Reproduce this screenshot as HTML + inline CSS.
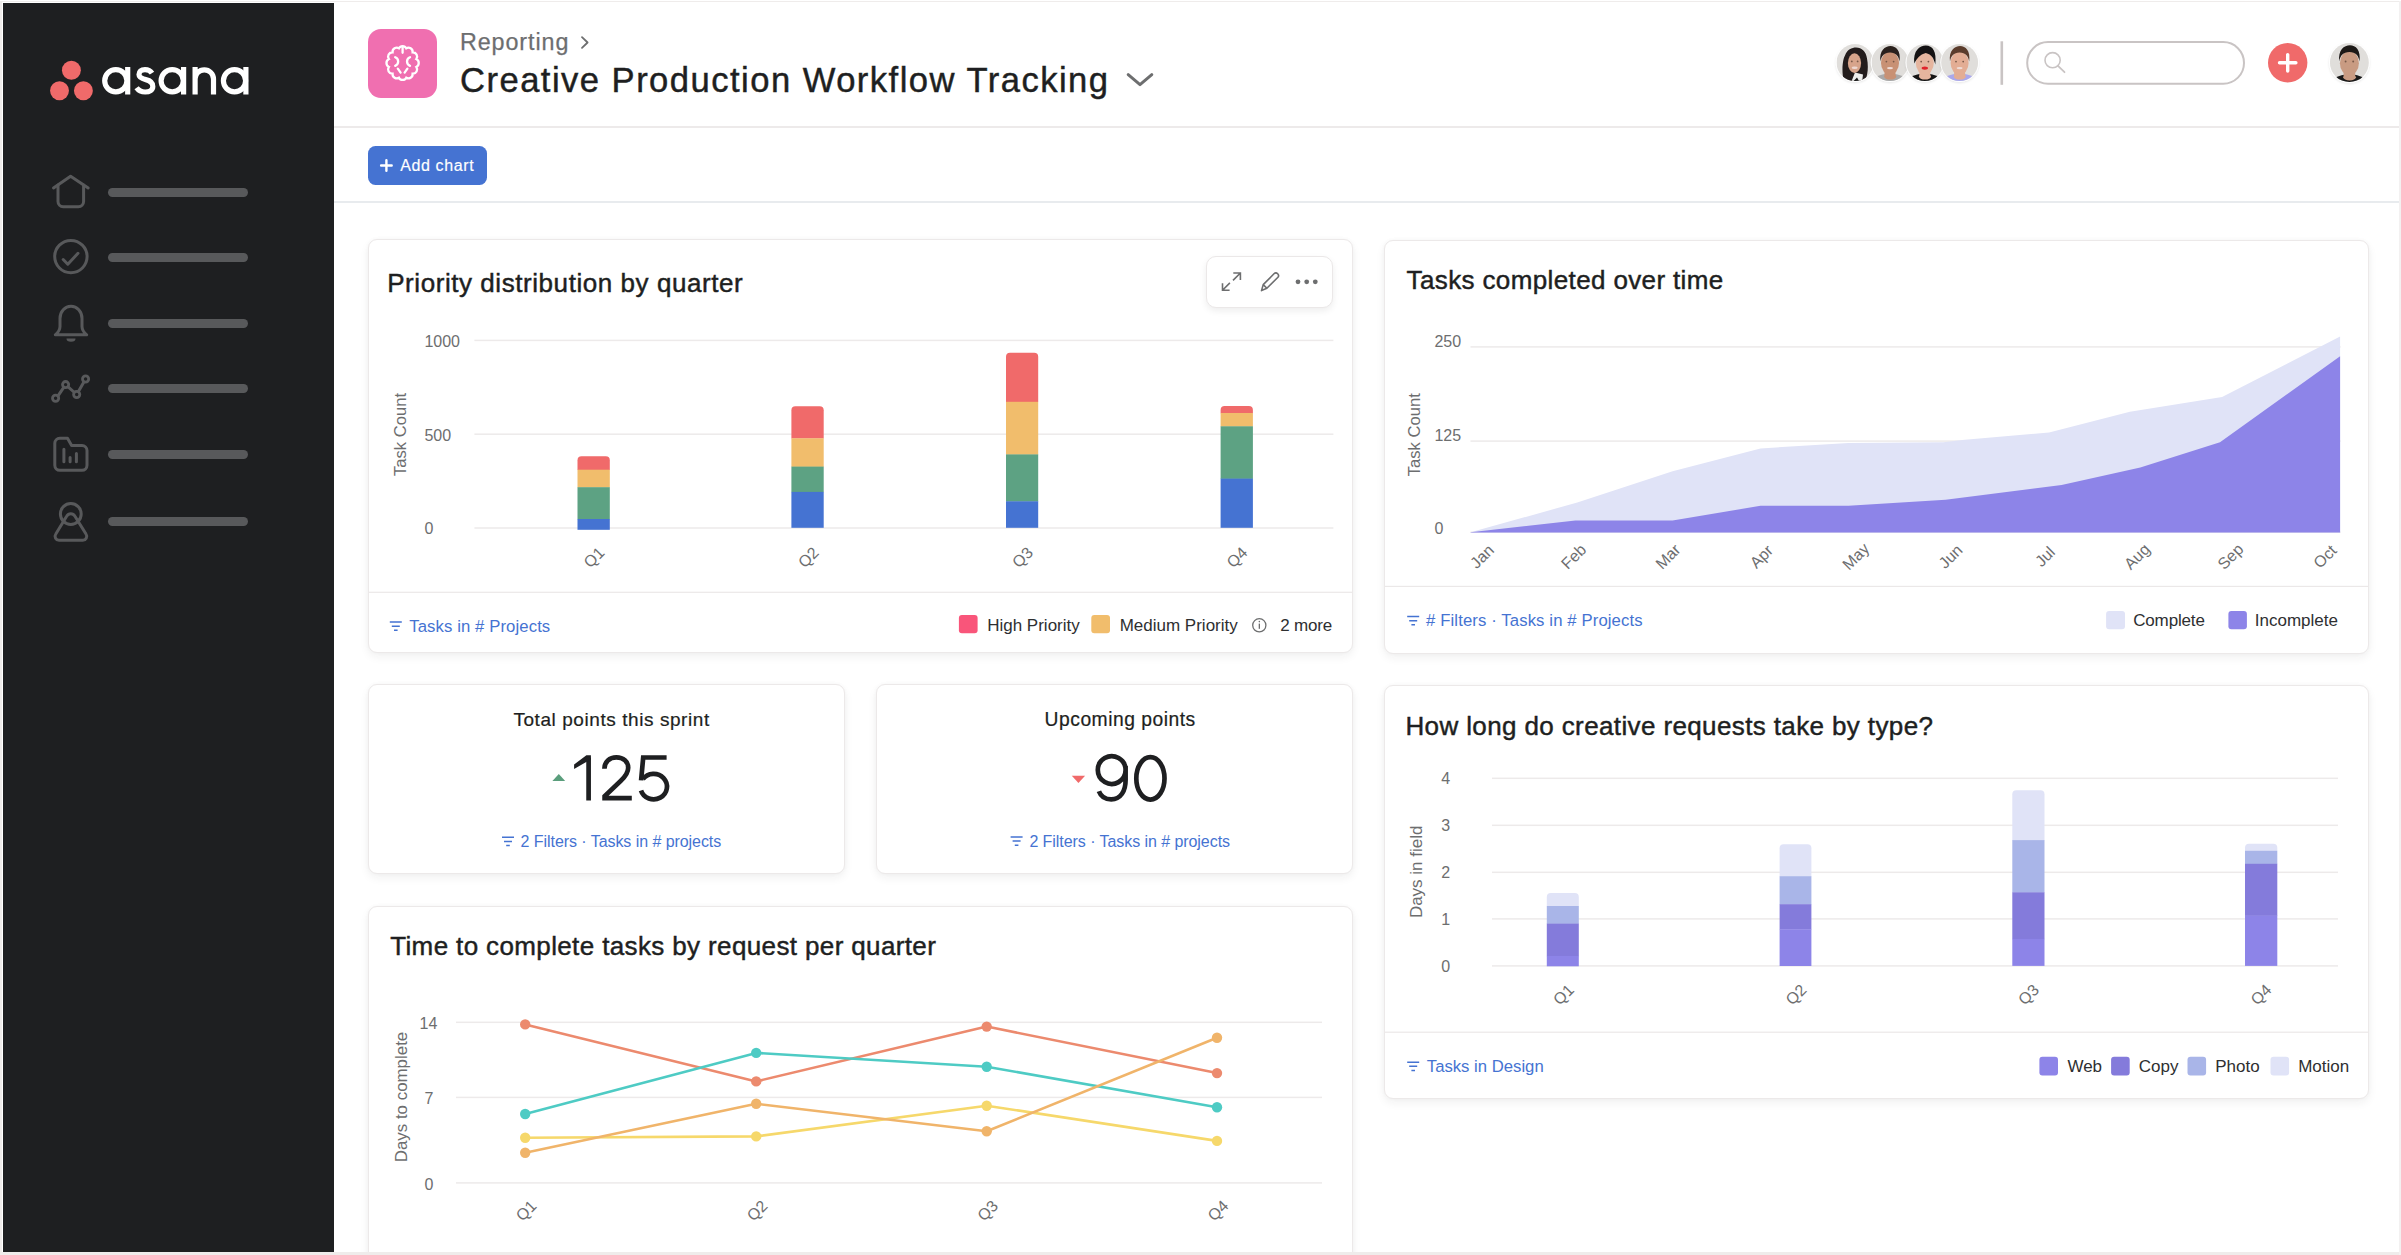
<!DOCTYPE html>
<html><head><meta charset="utf-8"><title>Asana Reporting</title><style>
*{box-sizing:border-box;margin:0;padding:0}
html,body{width:2401px;height:1255px;overflow:hidden;background:#fff;font-family:"Liberation Sans",sans-serif}
.a{position:absolute}
.t{position:absolute;white-space:nowrap;line-height:1}
.card{position:absolute;background:#fff;border:1.5px solid #ece9e9;border-radius:9px;box-shadow:0 4px 10px rgba(40,30,30,0.06),0 0 4px rgba(40,30,30,0.03)}
.bar{position:absolute;left:108px;width:140px;height:9px;border-radius:4.5px;background:#58595b}
svg{position:absolute;overflow:visible}
</style></head><body>
<div class="a" style="left:0;top:1px;width:2401px;height:1254px;background:#efeceb"></div>
<div class="a" style="left:2px;top:2px;width:2397px;height:1250px;background:#fff"></div>
<div class="a" style="left:3px;top:3px;width:331px;height:1249px;background:#1e1f21"></div>
<svg style="left:0;top:0" width="334" height="600" viewBox="0 0 334 600">
<circle cx="71.4" cy="70.2" r="9.45" fill="#f06a6a"/>
<circle cx="59.5" cy="90.8" r="9.45" fill="#f06a6a"/>
<circle cx="83.4" cy="90.8" r="9.45" fill="#f06a6a"/>
<g fill="none" stroke="#fff" stroke-width="5.2">
<circle cx="115.8" cy="80.75" r="11.1"/>
<path d="M127.7,67 V94.5"/>
<circle cx="172.2" cy="80.75" r="11.1"/>
<path d="M183.6,67 V94.5"/>
<circle cx="234.5" cy="80.75" r="11.1"/>
<path d="M245.9,67 V94.5"/>
<path d="M195.1,67 V94.5 M195.1,79 A9.2,9.2 0 0 1 213.5,79 V94.5"/>
<path d="M152,73.2 C150.5,70.8 148,69.6 145,69.6 C141,69.6 139,71.8 139,74.6 C139,77.8 142,78.8 145.8,79.6 C150.2,80.6 152.8,82.6 152.8,86.4 C152.8,90 149.6,92 145.2,92 C141.4,92 138.4,90.4 136.6,87.8"/>
</g>
</svg>
<svg style="left:0;top:0" width="334" height="600" viewBox="0 0 334 600">
<g fill="none" stroke="#58595b" stroke-width="3" stroke-linecap="round" stroke-linejoin="round">
<path d="M53.5,188 L70.6,176.2 L88.2,188"/>
<path d="M58,185 V201.5 a5.2,5.2 0 0 0 5.2,5.2 H78.4 a5.2,5.2 0 0 0 5.2,-5.2 V185"/>
<circle cx="70.9" cy="256.6" r="16.2"/>
<path d="M63.2,259.5 L67.8,264.2 L78,253.3"/>
<path d="M55.3,334.8 C57.5,333 60,330.5 60,326.5 V318.5 C60,311.5 65,306.3 71,306.3 C77,306.3 82,311.5 82,318.5 V326.5 C82,330.5 84.5,333 86.7,334.8 Z"/>
<path d="M56.5,398.2 L65.6,384.6 L76.7,394.5 L85.6,379"/>
<path d="M59.8,438.3 H67.5 L71.6,445.6 H82 a5,5 0 0 1 5,5 V465.3 a5,5 0 0 1 -5,5 H59.8 a5,5 0 0 1 -5,-5 V443.3 a5,5 0 0 1 5,-5 Z"/>
<path d="M63.9,449.3 V461.8 M70.1,457.5 V461.8 M76.4,453.6 V461.8"/>
<circle cx="70.8" cy="514" r="10.4"/>
<path d="M66.8,516 L55.8,534 a4,4 0 0 0 3.4,6.3 H82.6 a4,4 0 0 0 3.4,-6.3 L74.8,516 a4.6,4.6 0 0 0 -8,0 Z"/>
</g>
<path d="M66.5,338.5 a4.5,3.2 0 0 0 9,0 Z" fill="#58595b"/>
<g fill="#1e1f21" stroke="#58595b" stroke-width="2.8">
<circle cx="55.6" cy="398.2" r="3.1"/><circle cx="65.6" cy="384.6" r="3.1"/><circle cx="76.7" cy="394.5" r="3.1"/><circle cx="85.6" cy="379" r="3.1"/>
</g>
</svg>
<div class="bar" style="top:188px"></div>
<div class="bar" style="top:253px"></div>
<div class="bar" style="top:319px"></div>
<div class="bar" style="top:384px"></div>
<div class="bar" style="top:450px"></div>
<div class="bar" style="top:517px"></div>
<div class="a" style="left:334px;top:125.5px;width:2065px;height:2px;background:#edeaea"></div>
<div class="a" style="left:334px;top:201px;width:2065px;height:2px;background:#e8ebee"></div>
<div class="a" style="left:367.5px;top:28.7px;width:69px;height:69px;border-radius:13px;background:#f06fb0"></div>
<svg style="left:0;top:0" width="500" height="120" viewBox="0 0 500 120">
<g fill="none" stroke="#fff" stroke-width="2.3" stroke-linecap="round">
<path d="M406.28,48.32 A4.19,4.19 0 0 1 412.64,52.25 A4.34,4.34 0 0 1 416.32,59.07 A4.41,4.41 0 0 1 416.32,66.93 A4.34,4.34 0 0 1 412.64,73.75 A4.19,4.19 0 0 1 406.28,77.68 A4.12,4.12 0 0 1 398.92,77.68 A4.19,4.19 0 0 1 392.56,73.75 A4.34,4.34 0 0 1 388.88,66.93 A4.41,4.41 0 0 1 388.88,59.07 A4.34,4.34 0 0 1 392.56,52.25 A4.19,4.19 0 0 1 398.92,48.32 A4.12,4.12 0 0 1 406.28,48.32 Z"/>
<path d="M402.6,47.5 V52.8"/>
<path d="M395.2,57.2 a4.6,4.6 0 0 1 0,8.6"/>
<path d="M410,57.2 a4.6,4.6 0 0 0 0,8.6"/>
<path d="M397.8,68.6 l2.8,4 M407.4,68.6 l-2.8,4"/>
</g></svg>
<div class="t" style="left:460.00px;top:30.67px;font-size:23.3px;color:#6d6e6f;letter-spacing:0.92px;-webkit-text-stroke:0.25px #6d6e6f">Reporting</div>
<svg style="left:0;top:0" width="1200" height="120" viewBox="0 0 1200 120">
<path d="M582,37.2 L587.6,42.5 L582,47.9" fill="none" stroke="#6d6e6f" stroke-width="1.8" stroke-linecap="round" stroke-linejoin="round"/>
<path d="M1128.2,74.6 L1140,84.6 L1151.8,74.6" fill="none" stroke="#6d6e6f" stroke-width="3" stroke-linecap="round" stroke-linejoin="round"/>
</svg>
<div class="t" style="left:460.00px;top:63.40px;font-size:34.6px;color:#1e1f21;letter-spacing:1.47px;-webkit-text-stroke:0.45px #1e1f21">Creative Production Workflow Tracking</div>
<svg style="left:0;top:0" width="2401" height="130" viewBox="0 0 2401 130"><defs><filter id="avsh" x="-30%" y="-30%" width="160%" height="160%"><feDropShadow dx="0" dy="1" stdDeviation="1" flood-color="#000" flood-opacity="0.10"/></filter></defs><clipPath id="av1"><circle cx="1855" cy="62.6" r="18.5"/></clipPath><circle cx="1855" cy="62.6" r="19.3" fill="#fff" filter="url(#avsh)"/><g clip-path="url(#av1)"><rect x="1836.5" y="44.1" width="37.0" height="37.0" fill="#e0dedb"/><path d="M1844.00,81.60 C1841.00,70.60 1843.00,58.60 1845.00,55.60 C1847.00,49.60 1852.00,47.60 1856.00,47.60 C1862.00,47.60 1866.00,51.60 1867.00,58.60 C1868.50,65.60 1868.00,74.60 1865.00,81.60 Z" fill="#231c1c"/><path d="M1851.00,82.60 L1855.00,72.60 L1863.00,74.60 L1862.00,82.60 Z" fill="#eeeeec"/><path d="M1852.00,82.60 L1857.00,77.60 L1860.00,82.60 Z" fill="#151515"/><ellipse cx="1854.50" cy="63.10" rx="6.60" ry="9.80" fill="#d7a48b"/><circle cx="1851.80" cy="61.40" r="0.90" fill="#7a5a4a"/><circle cx="1857.60" cy="61.40" r="0.90" fill="#7a5a4a"/><ellipse cx="1854.70" cy="67.80" rx="3.00" ry="1.20" fill="#eed8d2"/></g><clipPath id="av2"><circle cx="1890" cy="62.6" r="18.5"/></clipPath><circle cx="1890" cy="62.6" r="19.3" fill="#fff" filter="url(#avsh)"/><g clip-path="url(#av2)"><rect x="1871.5" y="44.1" width="37.0" height="37.0" fill="#e0dedb"/><ellipse cx="1890" cy="85.60" rx="19.50" ry="12.00" fill="#a9a9a9"/><rect x="1884.50" y="68.60" width="11.00" height="8.00" fill="#c89174"/><ellipse cx="1890.20" cy="76.60" rx="6.00" ry="3.00" fill="#c89174"/><ellipse cx="1890" cy="63.10" rx="9.00" ry="11.60" fill="#c89174"/><path d="M1880.40,61.60 C1879.00,50.60 1885.00,46.10 1890.50,46.10 C1896.00,46.10 1901.00,50.60 1899.60,61.60 C1898.60,55.60 1896.00,53.10 1890.00,52.60 C1884.00,53.10 1881.40,55.60 1880.40,61.60 Z" fill="#2a211d"/><circle cx="1886.40" cy="61.60" r="0.90" fill="#7a5a4a"/><circle cx="1893.60" cy="61.60" r="0.90" fill="#7a5a4a"/><ellipse cx="1890" cy="68.10" rx="3.00" ry="1.20" fill="#efdcd6"/></g><clipPath id="av3"><circle cx="1924.8" cy="62.6" r="18.5"/></clipPath><circle cx="1924.8" cy="62.6" r="19.3" fill="#fff" filter="url(#avsh)"/><g clip-path="url(#av3)"><rect x="1906.3" y="44.1" width="37.0" height="37.0" fill="#e0dedb"/><ellipse cx="1924.8" cy="85.60" rx="19.50" ry="12.00" fill="#141414"/><rect x="1919.30" y="68.60" width="11.00" height="8.00" fill="#e5b59e"/><ellipse cx="1925.00" cy="76.60" rx="6.00" ry="3.00" fill="#e5b59e"/><ellipse cx="1924.8" cy="63.10" rx="9.00" ry="11.60" fill="#e5b59e"/><path d="M1914.30,63.60 C1912.80,50.60 1919.80,45.60 1925.80,45.60 C1932.80,45.60 1936.80,51.60 1935.30,64.60 C1933.80,58.60 1931.80,54.60 1925.80,53.10 C1919.80,54.60 1916.80,58.60 1914.30,63.60 Z" fill="#141213"/><circle cx="1921.20" cy="61.60" r="0.90" fill="#7a5a4a"/><circle cx="1928.40" cy="61.60" r="0.90" fill="#7a5a4a"/><ellipse cx="1924.8" cy="68.10" rx="3.20" ry="1.60" fill="#e0242c"/></g><clipPath id="av4"><circle cx="1959.6" cy="62.6" r="18.5"/></clipPath><circle cx="1959.6" cy="62.6" r="19.3" fill="#fff" filter="url(#avsh)"/><g clip-path="url(#av4)"><rect x="1941.1" y="44.1" width="37.0" height="37.0" fill="#e0dedb"/><ellipse cx="1959.6" cy="85.60" rx="19.50" ry="12.00" fill="#aaa8ec"/><rect x="1954.10" y="68.60" width="11.00" height="8.00" fill="#e3ad94"/><ellipse cx="1959.80" cy="76.60" rx="6.00" ry="3.00" fill="#e3ad94"/><ellipse cx="1959.6" cy="63.10" rx="9.00" ry="11.60" fill="#e3ad94"/><path d="M1950.00,61.60 C1948.60,50.60 1954.60,46.10 1960.10,46.10 C1965.60,46.10 1970.60,50.60 1969.20,61.60 C1968.20,55.60 1965.60,53.10 1959.60,52.60 C1953.60,53.10 1951.00,55.60 1950.00,61.60 Z" fill="#5b3c2c"/><circle cx="1956.00" cy="61.60" r="0.90" fill="#7a5a4a"/><circle cx="1963.20" cy="61.60" r="0.90" fill="#7a5a4a"/><ellipse cx="1959.6" cy="68.10" rx="3.00" ry="1.20" fill="#efdcd6"/></g><clipPath id="av5"><circle cx="2349.4" cy="62.6" r="19.5"/></clipPath><circle cx="2349.4" cy="62.6" r="20.3" fill="#fff" filter="url(#avsh)"/><g clip-path="url(#av5)"><rect x="2329.9" y="43.1" width="39.0" height="39.0" fill="#e0dedb"/><ellipse cx="2349.4" cy="86.84" rx="20.55" ry="12.65" fill="#191919"/><rect x="2343.60" y="68.92" width="11.59" height="8.43" fill="#c99b82"/><ellipse cx="2349.61" cy="77.36" rx="6.32" ry="3.16" fill="#c99b82"/><ellipse cx="2349.4" cy="63.13" rx="9.49" ry="12.23" fill="#c99b82"/><path d="M2339.28,61.55 C2337.81,49.95 2344.13,45.21 2349.93,45.21 C2355.72,45.21 2360.99,49.95 2359.52,61.55 C2358.46,55.22 2355.72,52.59 2349.40,52.06 C2343.08,52.59 2340.34,55.22 2339.28,61.55 Z" fill="#1d1917"/><circle cx="2345.61" cy="61.55" r="0.95" fill="#7a5a4a"/><circle cx="2353.19" cy="61.55" r="0.95" fill="#7a5a4a"/></g><rect x="2000.5" y="41.3" width="2.6" height="43.5" fill="#c9c4c4"/><rect x="2027.2" y="42.1" width="216.8" height="41.6" rx="20.8" fill="#fff" stroke="#c9c4c4" stroke-width="2"/><circle cx="2052.6" cy="60.2" r="7.6" fill="none" stroke="#c9c4c4" stroke-width="1.6"/><path d="M2058,65.8 L2064.5,72.2" stroke="#c9c4c4" stroke-width="1.8" stroke-linecap="round"/><circle cx="2287.7" cy="62.8" r="19.7" fill="#f06a6a"/><path d="M2287.7,54.6 V71 M2279.5,62.8 H2295.9" stroke="#fff" stroke-width="3.4" stroke-linecap="round"/></svg>
<div class="a" style="left:368px;top:146px;width:119px;height:39px;border-radius:7.5px;background:#4573d2"></div>
<svg style="left:0;top:0" width="500" height="200" viewBox="0 0 500 200"><path d="M386.4,160.2 V170.8 M381.1,165.5 H391.7" stroke="#fff" stroke-width="2.4" stroke-linecap="round"/></svg>
<div class="t" style="left:400.30px;top:157.55px;font-size:16px;color:#fff;letter-spacing:0.6px;-webkit-text-stroke:0.15px #fff">Add chart</div>
<div class="card" style="left:368px;top:239px;width:985px;height:414px"></div>
<svg style="left:0;top:0" width="2401" height="1255" viewBox="0 0 2401 1255" font-family="Liberation Sans, sans-serif"><rect x="474.4" y="339.65" width="859" height="1.5" fill="#edeaea"/><rect x="474.4" y="433.45" width="859" height="1.5" fill="#edeaea"/><rect x="474.4" y="527.25" width="859" height="1.5" fill="#edeaea"/><text x="424.4" y="346.9" font-size="16" fill="#6d6e6f" text-anchor="start" >1000</text><text x="424.4" y="440.7" font-size="16" fill="#6d6e6f" text-anchor="start" >500</text><text x="424.4" y="534.2" font-size="16" fill="#6d6e6f" text-anchor="start" >0</text><text x="400.2" y="434.5" font-size="16.6" fill="#6d6e6f" text-anchor="middle" dominant-baseline="central" transform="rotate(-90 400.2 434.5)">Task Count</text><path d="M577.5,470.0 V460.3 Q577.5,456.3 581.5,456.3 H605.8 Q609.8,456.3 609.8,460.3 V470.0 Z" fill="#f06a6a"/><rect x="577.5" y="469.7" width="32.299999999999955" height="17.8" fill="#f1bd6c"/><rect x="577.5" y="487.2" width="32.299999999999955" height="32.10000000000001" fill="#5da283"/><rect x="577.5" y="519.0" width="32.299999999999955" height="10.799999999999955" fill="#4573d2"/><path d="M791.4,438.6 V410.2 Q791.4,406.2 795.4,406.2 H819.7 Q823.7,406.2 823.7,410.2 V438.6 Z" fill="#f06a6a"/><rect x="791.4" y="438.3" width="32.30000000000007" height="28.600000000000012" fill="#f1bd6c"/><rect x="791.4" y="466.6" width="32.30000000000007" height="25.599999999999955" fill="#5da283"/><rect x="791.4" y="491.9" width="32.30000000000007" height="35.89999999999998" fill="#4573d2"/><path d="M1006.0,402.1 V356.8 Q1006.0,352.8 1010.0,352.8 H1034.2 Q1038.2,352.8 1038.2,356.8 V402.1 Z" fill="#f06a6a"/><rect x="1006.0" y="401.8" width="32.200000000000045" height="52.89999999999996" fill="#f1bd6c"/><rect x="1006.0" y="454.4" width="32.200000000000045" height="47.20000000000003" fill="#5da283"/><rect x="1006.0" y="501.3" width="32.200000000000045" height="26.499999999999943" fill="#4573d2"/><path d="M1220.6,413.3 V409.9 Q1220.6,405.9 1224.6,405.9 H1248.9 Q1252.9,405.9 1252.9,409.9 V413.3 Z" fill="#f06a6a"/><rect x="1220.6" y="413.0" width="32.30000000000018" height="13.600000000000012" fill="#f1bd6c"/><rect x="1220.6" y="426.3" width="32.30000000000018" height="52.60000000000001" fill="#5da283"/><rect x="1220.6" y="478.6" width="32.30000000000018" height="49.19999999999993" fill="#4573d2"/><text x="594" y="557.4" font-size="16" fill="#6d6e6f" text-anchor="middle" dominant-baseline="central" transform="rotate(-45 594 557.4)">Q1</text><text x="808.3" y="557.4" font-size="16" fill="#6d6e6f" text-anchor="middle" dominant-baseline="central" transform="rotate(-45 808.3 557.4)">Q2</text><text x="1022.5" y="557.4" font-size="16" fill="#6d6e6f" text-anchor="middle" dominant-baseline="central" transform="rotate(-45 1022.5 557.4)">Q3</text><text x="1237" y="557.4" font-size="16" fill="#6d6e6f" text-anchor="middle" dominant-baseline="central" transform="rotate(-45 1237 557.4)">Q4</text><rect x="369" y="591.7" width="983" height="1.2" fill="#ebe8e8"/><path d="M389.8,622.1 H401.8 M391.8,626.2 H399.8 M394.0,630.3000000000001 H397.6" stroke="#4573d2" stroke-width="1.5" stroke-linecap="butt"/><text x="409.3" y="632.0" font-size="16.7" fill="#4573d2" text-anchor="start" letter-spacing="0.1">Tasks in # Projects</text><rect x="958.9" y="614.9" width="18.7" height="18.4" rx="3" fill="#f9557a"/><text x="987.2" y="630.9" font-size="17" fill="#2e2f31" text-anchor="start" >High Priority</text><rect x="1091.3" y="614.9" width="18.7" height="18.4" rx="3" fill="#f1bd6c"/><text x="1119.7" y="630.9" font-size="17" fill="#2e2f31" text-anchor="start" >Medium Priority</text><circle cx="1259.3" cy="625.3" r="6.6" fill="none" stroke="#6d6e6f" stroke-width="1.3"/><rect x="1258.7" y="623.6" width="1.3" height="5.2" fill="#6d6e6f"/><circle cx="1259.35" cy="621.6" r="0.8" fill="#6d6e6f"/><text x="1280.3" y="630.9" font-size="17" fill="#2e2f31" text-anchor="start" letter-spacing="-0.2">2 more</text></svg>
<div class="a" style="left:1205.5px;top:255.5px;width:127px;height:52.5px;border-radius:10px;background:#fff;border:1px solid #ebe8e8;box-shadow:0 3px 7px rgba(0,0,0,0.07)"></div>
<svg style="left:0;top:0" width="2401" height="1255" viewBox="0 0 2401 1255" font-family="Liberation Sans, sans-serif"><g fill="none" stroke="#6d6e6f" stroke-width="1.6" stroke-linecap="butt"><path d="M1233.3,273 H1240.4 V280.1 M1240.4,273 L1233,280.4"/><path d="M1222.5,283.2 V290.3 H1229.6 M1222.5,290.3 L1229.9,282.9"/><path d="M1261.5,290.6 L1263.2,284.6 L1274,273.8 a2.6,2.6 0 0 1 3.7,3.7 L1266.9,288.3 Z M1263.2,284.6 L1266.9,288.3" stroke-linejoin="round"/></g><g fill="#6d6e6f"><circle cx="1298" cy="281.8" r="2.4"/><circle cx="1306.7" cy="281.8" r="2.4"/><circle cx="1315.3" cy="281.8" r="2.4"/></g></svg>
<div class="t" style="left:387.20px;top:269.59px;font-size:26px;color:#1e1f21;letter-spacing:0.56px;-webkit-text-stroke:0.45px #1e1f21">Priority distribution by quarter</div>
<div class="card" style="left:1384px;top:240px;width:985px;height:414px"></div>
<svg style="left:0;top:0" width="2401" height="1255" viewBox="0 0 2401 1255" font-family="Liberation Sans, sans-serif"><rect x="1470.5" y="346.15" width="870" height="1.5" fill="#edeaea"/><rect x="1470.5" y="440.35" width="870" height="1.5" fill="#edeaea"/><rect x="1470.5" y="531.5" width="870" height="1.5" fill="#edeaea"/><text x="1434.4" y="347.0" font-size="16" fill="#6d6e6f" text-anchor="start" >250</text><text x="1434.4" y="440.6" font-size="16" fill="#6d6e6f" text-anchor="start" >125</text><text x="1434.4" y="534.4" font-size="16" fill="#6d6e6f" text-anchor="start" >0</text><text x="1414.9" y="434.7" font-size="16.6" fill="#6d6e6f" text-anchor="middle" dominant-baseline="central" transform="rotate(-90 1414.9 434.7)">Task Count</text><path d="M1470.6,532.3 L1577.3,502.5 L1672.6,471.3 L1760.5,448.4 L1848.5,442.9 L1943.5,442.2 L1962.1,440.1 L2049.1,432.5 L2129.9,411.8 L2222.1,397.0 L2340.1,336.6 L2340.1,532.6 L1470.6,532.6 Z" fill="#e0e3f7"/><path d="M1470.6,532.3 L1575.4,520.4 L1672.6,520.4 L1760.5,505.8 L1848.5,505.8 L1945.6,499.8 L2061.6,485.1 L2140.3,467.5 L2220.0,442.2 L2340.1,356.2 L2340.1,532.6 L1470.6,532.6 Z" fill="#8d84e8"/><text x="1482" y="556.5" font-size="16" fill="#6d6e6f" text-anchor="middle" dominant-baseline="central" transform="rotate(-45 1482 556.5)">Jan</text><text x="1573.6" y="556.5" font-size="16" fill="#6d6e6f" text-anchor="middle" dominant-baseline="central" transform="rotate(-45 1573.6 556.5)">Feb</text><text x="1668" y="556.5" font-size="16" fill="#6d6e6f" text-anchor="middle" dominant-baseline="central" transform="rotate(-45 1668 556.5)">Mar</text><text x="1761.4" y="556.5" font-size="16" fill="#6d6e6f" text-anchor="middle" dominant-baseline="central" transform="rotate(-45 1761.4 556.5)">Apr</text><text x="1855.8" y="556.5" font-size="16" fill="#6d6e6f" text-anchor="middle" dominant-baseline="central" transform="rotate(-45 1855.8 556.5)">May</text><text x="1950.5" y="556.5" font-size="16" fill="#6d6e6f" text-anchor="middle" dominant-baseline="central" transform="rotate(-45 1950.5 556.5)">Jun</text><text x="2045" y="556.5" font-size="16" fill="#6d6e6f" text-anchor="middle" dominant-baseline="central" transform="rotate(-45 2045 556.5)">Jul</text><text x="2137" y="556.5" font-size="16" fill="#6d6e6f" text-anchor="middle" dominant-baseline="central" transform="rotate(-45 2137 556.5)">Aug</text><text x="2230.5" y="556.5" font-size="16" fill="#6d6e6f" text-anchor="middle" dominant-baseline="central" transform="rotate(-45 2230.5 556.5)">Sep</text><text x="2325" y="556.5" font-size="16" fill="#6d6e6f" text-anchor="middle" dominant-baseline="central" transform="rotate(-45 2325 556.5)">Oct</text><rect x="1385" y="585.8" width="983" height="1.2" fill="#ebe8e8"/><path d="M1407.2,616.6 H1419.2 M1409.2,620.7 H1417.2 M1411.4,624.8000000000001 H1415.0" stroke="#4573d2" stroke-width="1.5" stroke-linecap="butt"/><text x="1426.0" y="626.2" font-size="16.7" fill="#4573d2" text-anchor="start" letter-spacing="0.12"># Filters · Tasks in # Projects</text><rect x="2106.1" y="611" width="18.9" height="18.2" rx="3" fill="#e0e3f7"/><text x="2133.2" y="626.0" font-size="17" fill="#2e2f31" text-anchor="start" letter-spacing="-0.15">Complete</text><rect x="2228.4" y="611" width="18.5" height="18.2" rx="3" fill="#8d84e8"/><text x="2254.8" y="626.0" font-size="17" fill="#2e2f31" text-anchor="start" >Incomplete</text></svg>
<div class="t" style="left:1406.60px;top:266.59px;font-size:26px;color:#1e1f21;letter-spacing:0.37px;-webkit-text-stroke:0.45px #1e1f21">Tasks completed over time</div>
<div class="card" style="left:368px;top:684px;width:477px;height:190px"></div>
<div class="card" style="left:876px;top:684px;width:477px;height:190px"></div>
<div class="t" style="left:513.40px;top:709.51px;font-size:19px;color:#1e1f21;letter-spacing:0.57px;-webkit-text-stroke:0.22px #1e1f21">Total points this sprint</div>
<div class="t" style="left:1044.60px;top:710.06px;font-size:19.3px;color:#1e1f21;letter-spacing:0.5px;-webkit-text-stroke:0.22px #1e1f21">Upcoming points</div>
<svg style="left:0;top:0" width="2401" height="1255" viewBox="0 0 2401 1255" font-family="Liberation Sans, sans-serif"><path d="M552.4,781 L558.8,774.1 L565.2,781 Z" fill="#5a9e7c"/><path d="M1071.8,775.8 L1085.1,775.8 L1078.45,783 Z" fill="#f06a6a"/><path d="M502.0,837.3 H514.0 M504.0,841.4 H512.0 M506.2,845.5 H509.8" stroke="#4573d2" stroke-width="1.5" stroke-linecap="butt"/><text x="520.6" y="846.8" font-size="16" fill="#4573d2" text-anchor="start" letter-spacing="-0.06">2 Filters · Tasks in # projects</text><path d="M1010.6,837.0 H1022.6 M1012.6,841.1 H1020.6 M1014.8000000000001,845.2 H1018.4" stroke="#4573d2" stroke-width="1.5" stroke-linecap="butt"/><text x="1029.4" y="846.5" font-size="16" fill="#4573d2" text-anchor="start" letter-spacing="-0.06">2 Filters · Tasks in # projects</text><g fill="none" stroke="#1e1f21" stroke-width="4.7" stroke-linecap="butt" stroke-linejoin="miter"><path d="M588.6,800.5 V757.6"/><path d="M604.4,768.8 C604.4,761.6 609.6,757.4 616.4,757.4 C623.4,757.4 628.2,761.8 628.2,767.8 C628.2,773.2 625.2,776.8 620.6,781 L604.6,796.2 V798.2 H631.8"/><path d="M666.6,757.5 H643.2 L641.1,780.4"/><path d="M642.9,779.1 A13.3,12.75 0 1 1 641.0,790.4"/><path d="M1125.6,770.1 A13.9,13.9 0 1 1 1125.6,770 M1125.6,766 V780 C1125.6,791 1120.8,799.3 1111.2,799.3 C1104.8,799.3 1100.6,795.8 1098.9,791.2"/><ellipse cx="1150.4" cy="778.4" rx="14.1" ry="21.2"/></g><path d="M574.1,764.5 L586.4,755.3 H590.9 V759.8 L586.2,762.1 L574.1,768.9 Z" fill="#1e1f21"/></svg>
<div class="card" style="left:368px;top:906px;width:985px;height:420px"></div>
<svg style="left:0;top:0" width="2401" height="1255" viewBox="0 0 2401 1255" font-family="Liberation Sans, sans-serif"><rect x="456" y="1021.55" width="866" height="1.5" fill="#edeaea"/><rect x="456" y="1096.65" width="866" height="1.5" fill="#edeaea"/><rect x="456" y="1182.15" width="866" height="1.5" fill="#edeaea"/><text x="419.6" y="1028.7" font-size="16" fill="#6d6e6f" text-anchor="start" >14</text><text x="424.4" y="1103.6" font-size="16" fill="#6d6e6f" text-anchor="start" >7</text><text x="424.4" y="1190.2" font-size="16" fill="#6d6e6f" text-anchor="start" >0</text><text x="401.6" y="1097" font-size="16.9" fill="#6d6e6f" text-anchor="middle" dominant-baseline="central" transform="rotate(-90 401.6 1097)">Days to complete</text><path d="M525.2,1024.4 L756.2,1081.4 L986.7,1026.6 L1217.0,1073.1" fill="none" stroke="#ec8a6e" stroke-width="2.6" stroke-linejoin="round"/><circle cx="525.2" cy="1024.4" r="5.2" fill="#ec8a6e"/><circle cx="756.2" cy="1081.4" r="5.2" fill="#ec8a6e"/><circle cx="986.7" cy="1026.6" r="5.2" fill="#ec8a6e"/><circle cx="1217.0" cy="1073.1" r="5.2" fill="#ec8a6e"/><path d="M525.2,1114.0 L756.2,1052.9 L986.7,1066.7 L1217.0,1107.2" fill="none" stroke="#4ecbc4" stroke-width="2.6" stroke-linejoin="round"/><circle cx="525.2" cy="1114.0" r="5.2" fill="#4ecbc4"/><circle cx="756.2" cy="1052.9" r="5.2" fill="#4ecbc4"/><circle cx="986.7" cy="1066.7" r="5.2" fill="#4ecbc4"/><circle cx="1217.0" cy="1107.2" r="5.2" fill="#4ecbc4"/><path d="M525.2,1137.8 L756.2,1136.4 L986.7,1105.7 L1217.0,1140.9" fill="none" stroke="#f6d86b" stroke-width="2.6" stroke-linejoin="round"/><circle cx="525.2" cy="1137.8" r="5.2" fill="#f6d86b"/><circle cx="756.2" cy="1136.4" r="5.2" fill="#f6d86b"/><circle cx="986.7" cy="1105.7" r="5.2" fill="#f6d86b"/><circle cx="1217.0" cy="1140.9" r="5.2" fill="#f6d86b"/><path d="M525.2,1152.7 L756.2,1103.8 L986.7,1131.3 L1217.0,1037.7" fill="none" stroke="#f0b46a" stroke-width="2.6" stroke-linejoin="round"/><circle cx="525.2" cy="1152.7" r="5.2" fill="#f0b46a"/><circle cx="756.2" cy="1103.8" r="5.2" fill="#f0b46a"/><circle cx="986.7" cy="1131.3" r="5.2" fill="#f0b46a"/><circle cx="1217.0" cy="1037.7" r="5.2" fill="#f0b46a"/><text x="526.2" y="1210.5" font-size="16" fill="#6d6e6f" text-anchor="middle" dominant-baseline="central" transform="rotate(-45 526.2 1210.5)">Q1</text><text x="757.2" y="1210.5" font-size="16" fill="#6d6e6f" text-anchor="middle" dominant-baseline="central" transform="rotate(-45 757.2 1210.5)">Q2</text><text x="987.7" y="1210.5" font-size="16" fill="#6d6e6f" text-anchor="middle" dominant-baseline="central" transform="rotate(-45 987.7 1210.5)">Q3</text><text x="1218.0" y="1210.5" font-size="16" fill="#6d6e6f" text-anchor="middle" dominant-baseline="central" transform="rotate(-45 1218.0 1210.5)">Q4</text></svg>
<div class="t" style="left:390.20px;top:932.99px;font-size:26px;color:#1e1f21;letter-spacing:0.37px;-webkit-text-stroke:0.45px #1e1f21">Time to complete tasks by request per quarter</div>
<div class="card" style="left:1384px;top:685px;width:985px;height:414px"></div>
<svg style="left:0;top:0" width="2401" height="1255" viewBox="0 0 2401 1255" font-family="Liberation Sans, sans-serif"><rect x="1492" y="777.55" width="846" height="1.5" fill="#edeaea"/><rect x="1492" y="824.55" width="846" height="1.5" fill="#edeaea"/><rect x="1492" y="871.55" width="846" height="1.5" fill="#edeaea"/><rect x="1492" y="918.15" width="846" height="1.5" fill="#edeaea"/><rect x="1492" y="965.15" width="846" height="1.5" fill="#edeaea"/><text x="1441.2" y="784.0999999999999" font-size="16" fill="#6d6e6f" text-anchor="start" >4</text><text x="1441.2" y="831.0999999999999" font-size="16" fill="#6d6e6f" text-anchor="start" >3</text><text x="1441.2" y="878.0999999999999" font-size="16" fill="#6d6e6f" text-anchor="start" >2</text><text x="1441.2" y="924.6999999999999" font-size="16" fill="#6d6e6f" text-anchor="start" >1</text><text x="1441.2" y="971.6999999999999" font-size="16" fill="#6d6e6f" text-anchor="start" >0</text><text x="1417.0" y="871.8" font-size="17" fill="#6d6e6f" text-anchor="middle" dominant-baseline="central" transform="rotate(-90 1417.0 871.8)">Days in field</text><path d="M1546.8,906.3 V897.1 Q1546.8,893.1 1550.8,893.1 H1574.8 Q1578.8,893.1 1578.8,897.1 V906.3 Z" fill="#e0e3f7"/><rect x="1546.8" y="906.0" width="32.0" height="17.900000000000023" fill="#a9b5e8"/><rect x="1546.8" y="923.6" width="32.0" height="32.59999999999995" fill="#847bdb"/><rect x="1546.8" y="955.9" width="32.0" height="10.399999999999977" fill="#8d84e8"/><path d="M1779.6,876.5 V848.3 Q1779.6,844.3 1783.6,844.3 H1807.4 Q1811.4,844.3 1811.4,848.3 V876.5 Z" fill="#e0e3f7"/><rect x="1779.6" y="876.2" width="31.800000000000182" height="28.3" fill="#a9b5e8"/><rect x="1779.6" y="904.2" width="31.800000000000182" height="25.39999999999991" fill="#847bdb"/><rect x="1779.6" y="929.3" width="31.800000000000182" height="36.700000000000045" fill="#8d84e8"/><path d="M2012.3,840.4 V794.2 Q2012.3,790.2 2016.3,790.2 H2040.5 Q2044.5,790.2 2044.5,794.2 V840.4 Z" fill="#e0e3f7"/><rect x="2012.3" y="840.1" width="32.200000000000045" height="52.49999999999993" fill="#a9b5e8"/><rect x="2012.3" y="892.3" width="32.200000000000045" height="46.90000000000002" fill="#847bdb"/><rect x="2012.3" y="938.9" width="32.200000000000045" height="27.0" fill="#8d84e8"/><path d="M2245.0,851.0999999999999 V847.8 Q2245.0,843.8 2249.0,843.8 H2273.3 Q2277.3,843.8 2277.3,847.8 V851.0999999999999 Z" fill="#e0e3f7"/><rect x="2245.0" y="850.8" width="32.30000000000018" height="13.3" fill="#a9b5e8"/><rect x="2245.0" y="863.8" width="32.30000000000018" height="52.100000000000065" fill="#847bdb"/><rect x="2245.0" y="915.6" width="32.30000000000018" height="50.299999999999955" fill="#8d84e8"/><text x="1563.5" y="994.5" font-size="16" fill="#6d6e6f" text-anchor="middle" dominant-baseline="central" transform="rotate(-45 1563.5 994.5)">Q1</text><text x="1796" y="994.5" font-size="16" fill="#6d6e6f" text-anchor="middle" dominant-baseline="central" transform="rotate(-45 1796 994.5)">Q2</text><text x="2028.5" y="994.5" font-size="16" fill="#6d6e6f" text-anchor="middle" dominant-baseline="central" transform="rotate(-45 2028.5 994.5)">Q3</text><text x="2261" y="994.5" font-size="16" fill="#6d6e6f" text-anchor="middle" dominant-baseline="central" transform="rotate(-45 2261 994.5)">Q4</text><rect x="1385" y="1031.6" width="983" height="1.2" fill="#ebe8e8"/><path d="M1407.2,1062.2 H1419.2 M1409.2,1066.3 H1417.2 M1411.4,1070.4 H1415.0" stroke="#4573d2" stroke-width="1.5" stroke-linecap="butt"/><text x="1426.8" y="1071.8" font-size="16.7" fill="#4573d2" text-anchor="start" >Tasks in Design</text><rect x="2039.4" y="1056.8" width="18.6" height="18.6" rx="3" fill="#8d84e8"/><text x="2067.4" y="1072.2" font-size="17" fill="#2e2f31" text-anchor="start" >Web</text><rect x="2111.1" y="1056.8" width="18.6" height="18.6" rx="3" fill="#847bdb"/><text x="2138.8" y="1072.2" font-size="17" fill="#2e2f31" text-anchor="start" >Copy</text><rect x="2187.5" y="1056.8" width="18.6" height="18.6" rx="3" fill="#a9b5e8"/><text x="2215.2" y="1072.2" font-size="17" fill="#2e2f31" text-anchor="start" >Photo</text><rect x="2270.5" y="1056.8" width="18.6" height="18.6" rx="3" fill="#e0e3f7"/><text x="2298.2" y="1072.2" font-size="17" fill="#2e2f31" text-anchor="start" >Motion</text></svg>
<div class="t" style="left:1405.40px;top:712.59px;font-size:26px;color:#1e1f21;letter-spacing:0.38px;-webkit-text-stroke:0.45px #1e1f21">How long do creative requests take by type?</div>
<div class="a" style="left:0;top:1252px;width:2401px;height:3px;background:#efeceb"></div>
<div class="a" style="left:2399px;top:1px;width:2px;height:1254px;background:#f3f1f1"></div>

</body></html>
